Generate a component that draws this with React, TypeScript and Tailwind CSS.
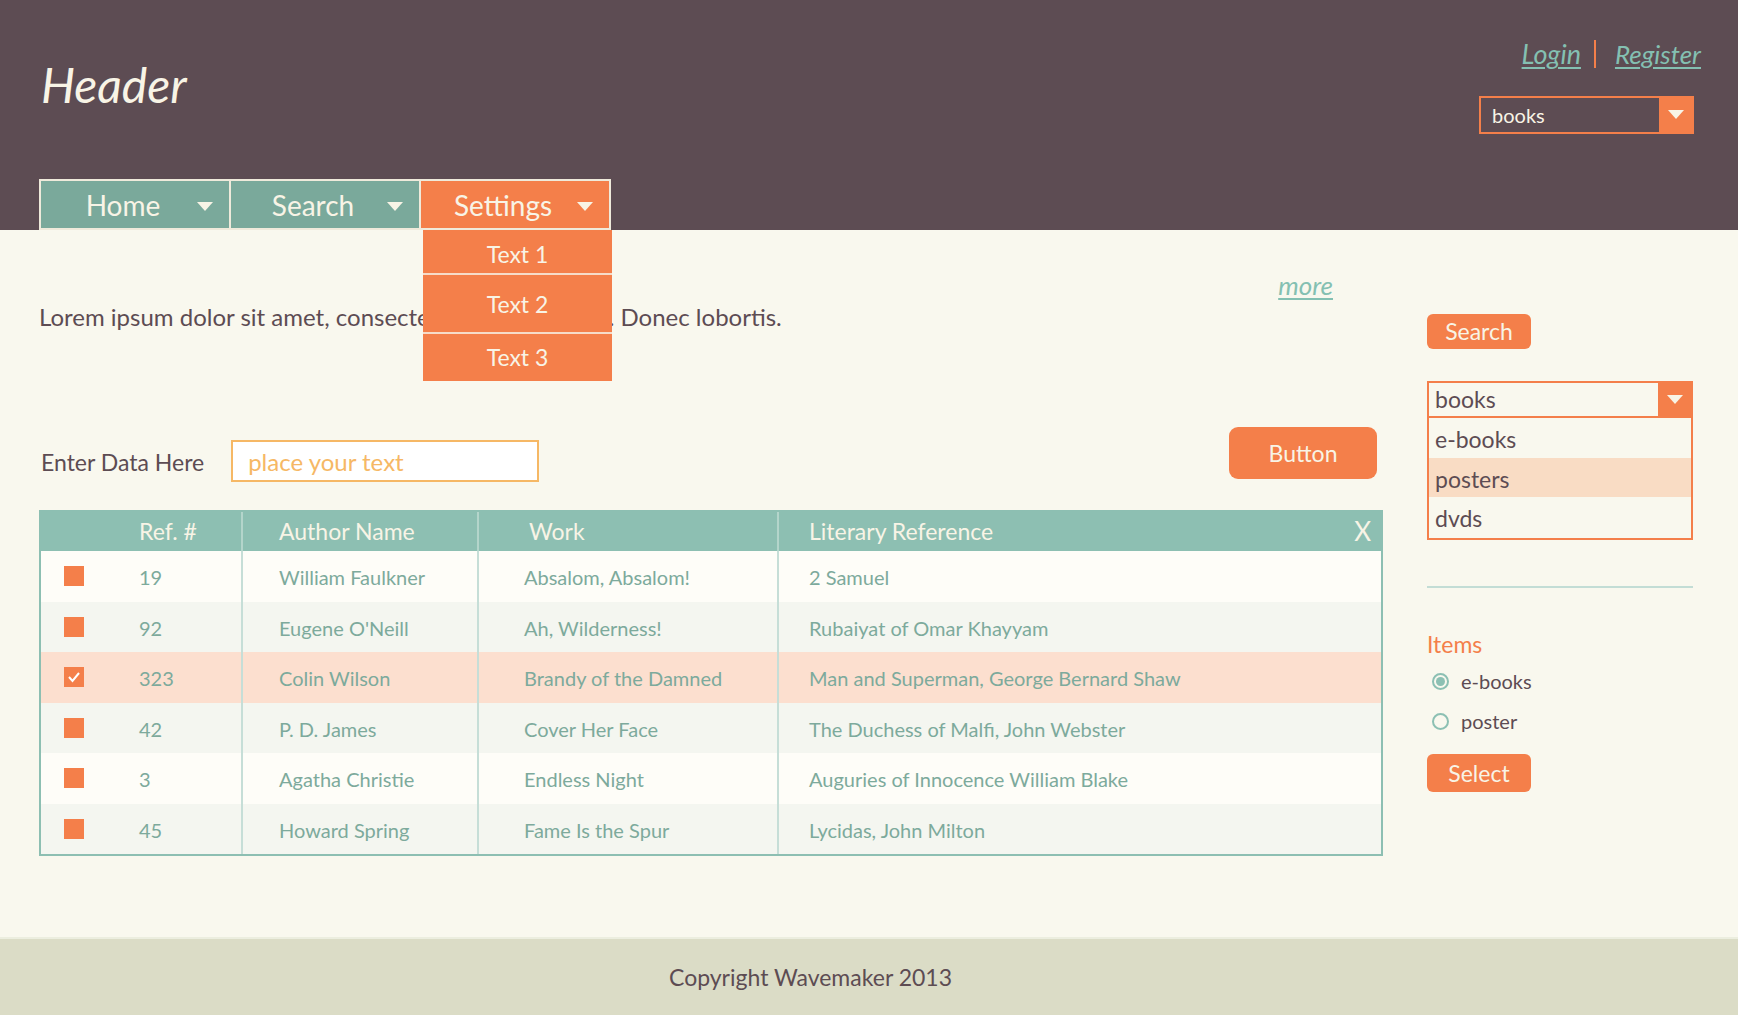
import React from 'react';

const Caret = ({ className = '' }: { className?: string }) => (
    <svg width="16" height="9" viewBox="0 0 16 9" className={className}>
        <polygon points="0,0 16,0 8,9" fill="#f8f4e6" />
    </svg>
);

const rows = [
    { ref: '19', author: 'William Faulkner', work: 'Absalom, Absalom!', lit: '2 Samuel', bg: 'bg-[#fefdf8]' },
    { ref: '92', author: "Eugene O'Neill", work: 'Ah, Wilderness!', lit: 'Rubaiyat of Omar Khayyam', bg: 'bg-[#f4f6f0]' },
    { ref: '323', author: 'Colin Wilson', work: 'Brandy of the Damned', lit: 'Man and Superman, George Bernard Shaw', bg: 'bg-[#fcdfcf]', checked: true },
    { ref: '42', author: 'P. D. James', work: 'Cover Her Face', lit: 'The Duchess of Malfi, John Webster', bg: 'bg-[#f4f6f0]' },
    { ref: '3', author: 'Agatha Christie', work: 'Endless Night', lit: 'Auguries of Innocence William Blake', bg: 'bg-[#fefdf8]' },
    { ref: '45', author: 'Howard Spring', work: 'Fame Is the Spur', lit: 'Lycidas, John Milton', bg: 'bg-[#f4f6f0]' },
];

const NavTab = ({ label, active = false, first = false }: { label: string; active?: boolean; first?: boolean }) => (
    <div
        className={`relative w-[192px] h-[51px] border-2 border-[#efeadb] ${first ? '' : '-ml-[2px]'} ${active ? 'bg-[#f47f4a]' : 'bg-[#7aa99b]'} flex items-center`}
    >
        <span className="flex-1 text-center text-[28px] text-[#f8f4e6] pl-[8px]">{label}</span>
        <Caret className="mr-[16px] mt-[4px]" />
    </div>
);

const App = () => {
    return (
        <div className="w-[1738px] min-h-[1015px] bg-[#f9f8ee] text-[#5d4c53]" style={{ fontFamily: 'Lato, "Open Sans", sans-serif' }}>
            {/* Header */}
            <header className="h-[230px] bg-[#5d4c53] flex justify-between pl-[39px] pr-[44px]">
                <div className="flex flex-col">
                    <h1 className="pt-[61px] pl-[2px] text-[48px] leading-none italic font-normal text-[#f8f4e6]">Header</h1>
                    <nav className="mt-auto flex relative">
                        <NavTab label="Home" first />
                        <NavTab label="Search" />
                        <div className="relative">
                            <NavTab label="Settings" active />
                            <div className="absolute left-[2px] top-[51px] w-[189px] z-10 flex flex-col">
                                <div className="h-[43px] bg-[#f47f4a] flex items-center justify-center text-[23px] text-[#f8f4e6] pt-[5px]">Text 1</div>
                                <div className="h-[2px] bg-[#f6dcc9]" />
                                <div className="h-[57px] bg-[#f47f4a] flex items-center justify-center text-[23px] text-[#f8f4e6] pt-[2px]">Text 2</div>
                                <div className="h-[2px] bg-[#f6dcc9]" />
                                <div className="h-[47px] bg-[#f47f4a] flex items-center justify-center text-[23px] text-[#f8f4e6]">Text 3</div>
                            </div>
                        </div>
                    </nav>
                </div>
                <div className="flex flex-col items-end pt-[34px]">
                    <div className="flex items-center -mr-[7px] text-[26px] italic text-[#84c0b2]">
                        <a className="underline underline-offset-[3px] decoration-[2px] text-[27px]">Login</a>
                        <span className="ml-[13px] mr-[19px] w-[2px] h-[28px] bg-[#f47f4a]" />
                        <a className="underline underline-offset-[3px] decoration-[2px]">Register</a>
                    </div>
                    <div className="mt-[21px] w-[215px] h-[38px] border-2 border-[#f47f4a] flex">
                        <span className="flex-1 pl-[11px] text-[20px] leading-[34px] text-[#f8f4e6]">books</span>
                        <div className="w-[33px] bg-[#f47f4a] flex items-center justify-center">
                            <Caret />
                        </div>
                    </div>
                </div>
            </header>

            {/* Main */}
            <main className="h-[707px] flex pl-[39px] pr-[45px] gap-[44px]">
                <section className="w-[1344px] flex flex-col">
                    <div className="flex justify-between items-start pt-[36px]">
                        <p className="mt-[37px] text-[24px] leading-[28px]">
                            Lorem ipsum dolor sit amet, consectetur adipiscing elit. Donec lobortis.
                        </p>
                        <a className="mr-[50px] text-[26px] italic text-[#84c0b2] underline underline-offset-[3px] decoration-[2px]">more</a>
                    </div>

                    <div className="flex items-start mt-[96px]">
                        <label className="mt-[21px] ml-[2px] text-[23px] leading-[28px]">Enter Data Here</label>
                        <input
                            placeholder="place your text"
                            className="ml-[27px] mt-[13px] w-[308px] h-[42px] border-2 border-[#f6b865] bg-white px-[15px] text-[24px] outline-none placeholder:text-[#f6b865]"
                        />
                        <button className="ml-auto mr-[6px] w-[148px] h-[52px] rounded-[9px] bg-[#f47f4a] text-[23px] text-[#f8f4e6]">Button</button>
                    </div>

                    {/* Table */}
                    <div className="mt-[28px] border-2 border-[#8dbfb2]">
                        <div className="grid grid-cols-[200px_236px_300px_1fr] h-[39px] bg-[#8dbfb2] text-[23px] text-[#f8f4e6]">
                            <div className="pl-[98px] flex items-center">Ref. #</div>
                            <div className="border-l-2 border-[#b4d5cb] pl-[36px] flex items-center">Author Name</div>
                            <div className="border-l-2 border-[#b4d5cb] pl-[50px] flex items-center">Work</div>
                            <div className="border-l-2 border-[#b4d5cb] pl-[30px] pr-[10px] flex items-center justify-between">
                                <span>Literary Reference</span>
                                <span className="text-[26px]">X</span>
                            </div>
                        </div>
                        {rows.map((r) => (
                            <div key={r.ref} className={`grid grid-cols-[200px_236px_300px_1fr] h-[50.5px] ${r.bg} text-[20px] text-[#7daa9c]`}>
                                <div className="flex items-center pl-[23px] pt-[2px]">
                                    <span className="w-[20px] h-[20px] bg-[#f47f4a] flex items-center justify-center -mt-[2px]">
                                        {r.checked && (
                                            <svg width="14" height="12" viewBox="0 0 14 12">
                                                <polyline points="2,6 5.5,10 12,2" fill="none" stroke="#fff" strokeWidth="2" />
                                            </svg>
                                        )}
                                    </span>
                                    <span className="ml-[55px]">{r.ref}</span>
                                </div>
                                <div className="border-l-2 border-[#c6ded7] pl-[36px] pt-[2px] flex items-center">{r.author}</div>
                                <div className="border-l-2 border-[#c6ded7] pl-[45px] pt-[2px] flex items-center">{r.work}</div>
                                <div className="border-l-2 border-[#c6ded7] pl-[30px] pt-[2px] flex items-center">{r.lit}</div>
                            </div>
                        ))}
                    </div>
                </section>

                {/* Sidebar */}
                <aside className="w-[266px] flex flex-col items-start">
                    <button className="mt-[84px] w-[104px] h-[35px] rounded-[6px] bg-[#f47f4a] text-[23px] text-[#f8f4e6]">Search</button>

                    <div className="mt-[32px] w-[266px] border-2 border-[#f47f4a]">
                        <div className="h-[35px] flex border-b-2 border-[#f47f4a]">
                            <span className="flex-1 pl-[6px] text-[23px] leading-[33px]">books</span>
                            <div className="w-[33px] bg-[#f47f4a] flex items-center justify-center">
                                <Caret />
                            </div>
                        </div>
                        <div className="h-[40px] pl-[6px] pt-[3px] text-[23px] flex items-center">e-books</div>
                        <div className="h-[39px] pl-[6px] pt-[3px] text-[23px] flex items-center bg-[#f9dcc4]">posters</div>
                        <div className="h-[41px] pl-[6px] pt-[1px] text-[23px] flex items-center">dvds</div>
                    </div>

                    <div className="mt-[46px] w-[266px] h-[2px] bg-[#c3ddd5]" />

                    <h3 className="mt-[42px] text-[23px] leading-[28px] text-[#f47f4a]">Items</h3>
                    <label className="mt-[8px] ml-[5px] flex items-center gap-[12px] text-[20px]">
                        <span className="w-[17px] h-[17px] rounded-full border-2 border-[#8cc0b3] flex items-center justify-center">
                            <span className="w-[9px] h-[9px] rounded-full bg-[#8cc0b3]" />
                        </span>
                        e-books
                    </label>
                    <label className="mt-[10px] ml-[5px] flex items-center gap-[12px] text-[20px]">
                        <span className="w-[17px] h-[17px] rounded-full border-2 border-[#8cc0b3]" />
                        poster
                    </label>
                    <button className="mt-[18px] w-[104px] h-[38px] rounded-[6px] bg-[#f47f4a] text-[23px] text-[#f8f4e6]">Select</button>
                </aside>
            </main>

            {/* Footer */}
            <footer className="h-[78px] bg-[#dbdcc6] border-t-2 border-[#eceedf] flex items-center pl-[669px]">
                <span className="text-[23px]">Copyright Wavemaker 2013</span>
            </footer>
        </div>
    );
};

export default App;
